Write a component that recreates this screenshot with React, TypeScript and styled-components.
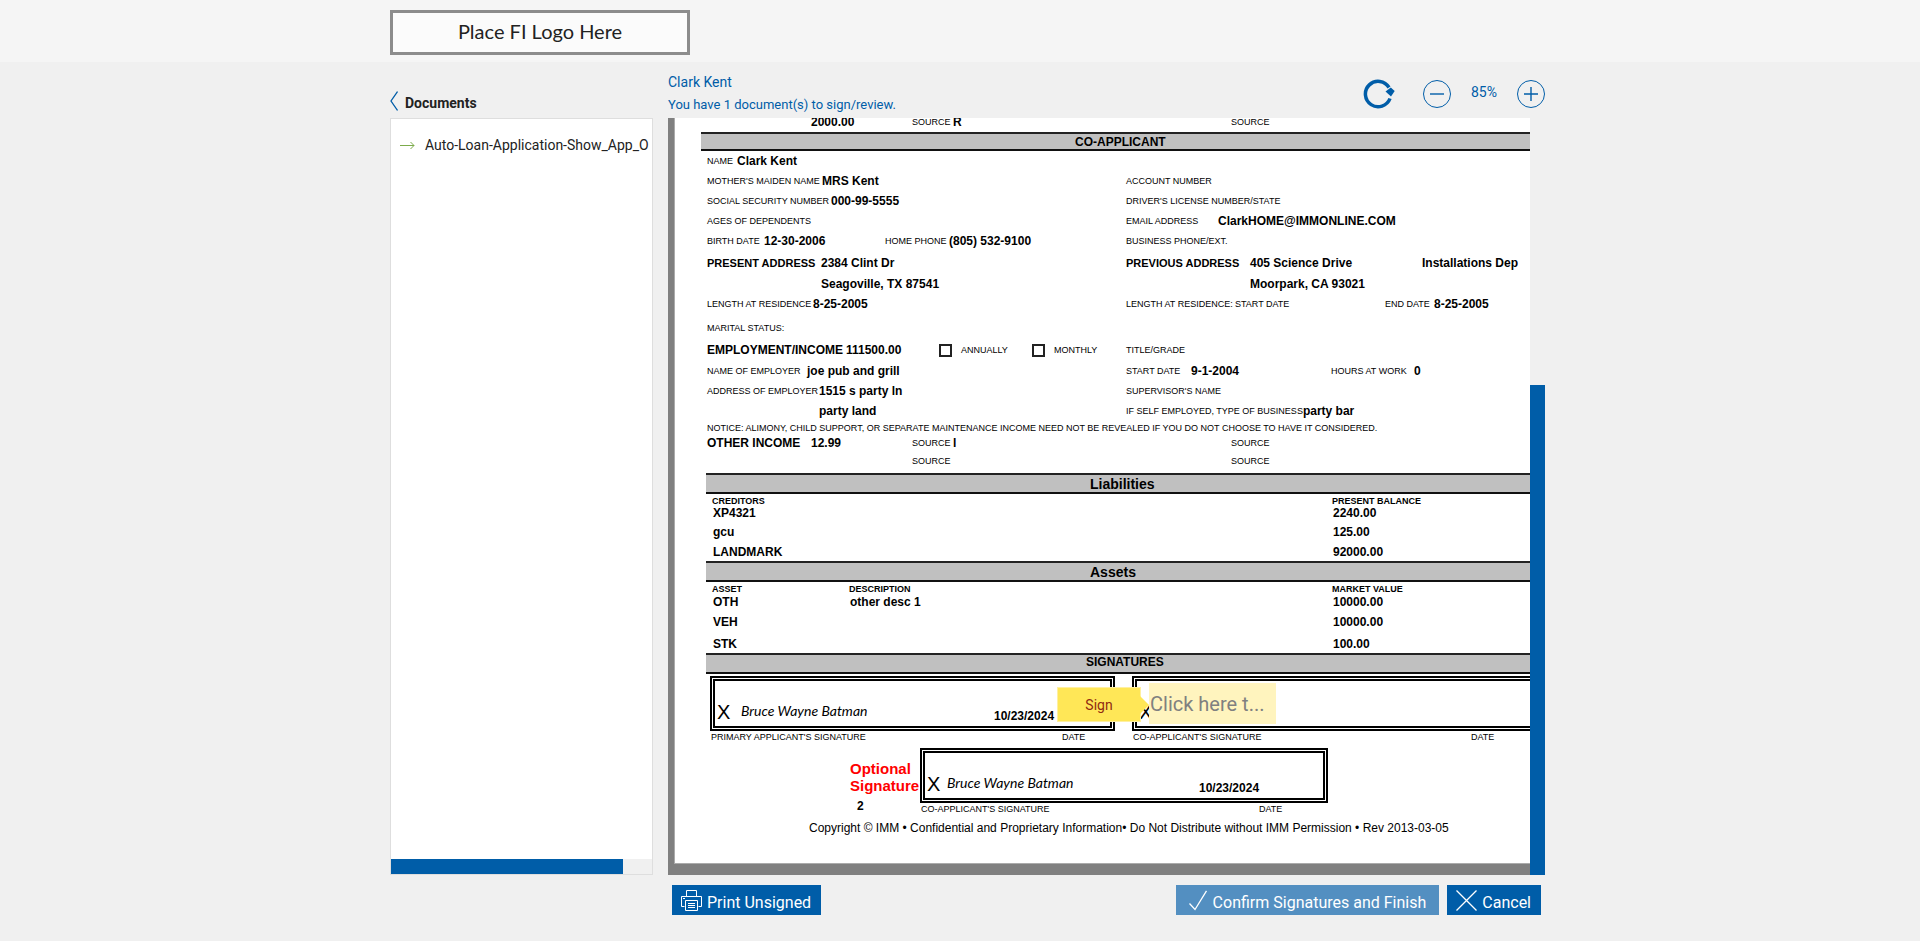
import React from "react";
import styled, { createGlobalStyle } from "styled-components";

const blue = "#005da8";

const GlobalStyle = createGlobalStyle`
  *, *::before, *::after { box-sizing: border-box; }
  body {
    margin: 0;
    background: #f0f0f0;
    color: #222;
    font-family: Roboto, "Liberation Sans", sans-serif;
    font-size: 14px;
  }
`;

const Header = styled.header`
  background: #f5f5f5;
  height: 62px;
  padding-top: 10px;
`;

const Container = styled.div`
  max-width: 1170px;
  margin: 0 auto;
  padding-left: 15px;
`;

const Logo = styled.div`
  width: 300px;
  height: 45px;
  border: 3px solid #8c8c8c;
  background: #fbfbfb;
  display: flex;
  align-items: center;
  justify-content: center;
  padding-bottom: 3px;
  font-family: Lato, sans-serif;
  font-size: 20px;
  line-height: 24px;
  color: #222;
`;

const Main = styled.main`
  display: grid;
  grid-template-columns: 263px minmax(0, 1fr);
  grid-template-rows: 56px auto auto;
  column-gap: 15px;
`;

const BackLink = styled.a`
  display: flex;
  align-items: flex-start;
  gap: 7px;
  padding-top: 29px;
  color: #222;
  font-weight: 700;
  line-height: 24px;
  text-decoration: none;
`;

const TopBar = styled.div`
  display: flex;
  justify-content: space-between;
`;

const Intro = styled.div`
  padding-top: 9px;
  line-height: 22px;
  color: ${blue};
`;

const Person = styled.div``;

const Pending = styled.div`
  padding-top: 1px;
  font-size: 13px;
`;

const Tools = styled.div`
  display: flex;
  align-items: center;
  height: 56px;
  padding-top: 8px;
`;

const IconButton = styled.button`
  display: flex;
  padding: 0;
  border: 0;
  background: none;
  color: ${blue};
`;

const RefreshButton = styled(IconButton)`
  margin-right: 28px;
`;

const ZoomLevel = styled.span`
  width: 66px;
  padding-bottom: 4px;
  text-align: center;
  color: ${blue};
`;

const Sidebar = styled.nav`
  border: 1px solid #dedede;
  background: #fff;
  display: flex;
  flex-direction: column;
  justify-content: space-between;
  overflow: hidden;
`;

const DocLink = styled.a`
  display: flex;
  align-items: center;
  gap: 10px;
  padding: 16px 0 0 9px;
  line-height: 20px;
  white-space: nowrap;
  color: #222;
  text-decoration: none;
`;

const SideTrack = styled.div`
  height: 15px;
  background: #f0f0f0;
`;

const SideThumb = styled.div`
  width: 89%;
  height: 15px;
  background: ${blue};
`;

const Viewer = styled.section`
  display: flex;
  min-width: 0;
`;

const Canvas = styled.div`
  flex: 1;
  min-width: 0;
  background: #808080;
  padding: 0 0 11px 6px;
  overflow: hidden;
`;

const ViewTrack = styled.div`
  width: 15px;
  display: flex;
  flex-direction: column;
  justify-content: flex-end;
`;

const ViewThumb = styled.div`
  height: 490px;
  background: ${blue};
`;

const Page = styled.article`
  background: #fff;
  border-left: 1px solid #ababab;
  border-bottom: 1px solid #ababab;
  padding-bottom: 27px;
  overflow: hidden;
  font-family: "Liberation Sans", Arial, sans-serif;
  color: #000;
  white-space: nowrap;
`;

const Form = styled.div`
  padding: 0 0 1px 32px;
`;

const FirstForm = styled(Form)`
  margin-top: -5px;
  padding-bottom: 1px;
`;

const Line = styled.div<{ $h: number }>`
  display: flex;
  align-items: center;
  height: ${(p) => p.$h}px;
`;

const Half = styled.div`
  flex: 0 0 419px;
  display: flex;
  align-items: center;
`;

const Label = styled.span<{ $w?: number }>`
  flex: 0 0 ${(p) => (p.$w ? `${p.$w}px` : "auto")};
  font-size: 9px;
  line-height: 12px;
`;

const Strong = styled(Label)`
  font-size: 11px;
  font-weight: 700;
`;

const Value = styled(Label)`
  font-size: 12px;
  line-height: 14px;
  font-weight: 700;
`;

const Space = styled.span<{ $w: number }>`
  flex: 0 0 ${(p) => p.$w}px;
`;

const Tick = styled.label<{ $w: number }>`
  flex: 0 0 ${(p) => p.$w}px;
  display: flex;
  align-items: center;
  gap: 9px;
  font-size: 9px;
  line-height: 12px;
`;

const TickBox = styled.input`
  appearance: none;
  width: 13px;
  height: 13px;
  margin: 0;
  border: 2px solid #222;
  background: #fff;
`;

const Band = styled.h2<{ $h: number; $indent: number; $size: number; $left: number }>`
  display: flex;
  align-items: center;
  height: ${(p) => p.$h}px;
  margin: 0 0 0 ${(p) => p.$left}px;
  padding-left: ${(p) => p.$indent}px;
  border-top: 2px solid #222;
  border-bottom: 2px solid #111;
  background: #c0c0c0;
  font-size: ${(p) => p.$size}px;
  line-height: 16px;
`;

const SignBand = styled(Band)`
  padding-bottom: 3px;
`;

const Table = styled.table`
  table-layout: fixed;
  width: 100%;
  border-collapse: collapse;
  text-align: left;
`;

const TableWrap = styled.div`
  padding-left: 37px;
`;

const Row = styled.tr<{ $h: number }>`
  height: ${(p) => p.$h}px;
`;

const Th = styled.th<{ $w?: number }>`
  width: ${(p) => (p.$w ? `${p.$w}px` : "auto")};
  padding: 0;
  font-size: 9px;
  line-height: 12px;
`;

const Td = styled.td`
  padding: 0 0 0 1px;
  font-size: 12px;
  line-height: 13px;
  font-weight: 700;
`;

const Signatures = styled.div`
  display: flex;
  gap: 17px;
  padding: 2px 0 0 35px;
`;

const Signer = styled.div<{ $w: number }>`
  flex: 0 0 ${(p) => p.$w}px;
  position: relative;
`;

const SignBox = styled.div`
  display: flex;
  align-items: flex-end;
  height: 55px;
  padding: 0 0 2px 2px;
  border: 5px double #000;
`;

const Mark = styled.span<{ $w: number }>`
  flex: 0 0 ${(p) => p.$w}px;
  font-size: 20px;
  line-height: 24px;
`;

const Script = styled.span<{ $w: number }>`
  flex: 0 0 ${(p) => p.$w}px;
  font-family: Lato, sans-serif;
  font-size: 14px;
  font-style: italic;
  line-height: 26px;
`;

const SignDate = styled(Value)`
  padding-bottom: 1px;
`;

const Caption = styled.div`
  display: flex;
  padding-left: 1px;
  height: 17px;
  align-items: flex-start;
`;

const SignTag = styled.button`
  position: absolute;
  left: -75px;
  top: 11px;
  width: 84px;
  height: 35px;
  padding: 0;
  border: 1px solid #fff0a0;
  background: #ffe757;
  color: #8f2a12;
  font: 14px Roboto, sans-serif;

  &::after {
    content: "";
    position: absolute;
    left: 82px;
    top: 8px;
    border-left: 9px solid #ffe757;
    border-top: 9px solid transparent;
    border-bottom: 9px solid transparent;
  }
`;

const SignField = styled.button`
  position: absolute;
  left: 17px;
  top: 7px;
  width: 127px;
  height: 41px;
  padding: 0 0 0 1px;
  border: 0;
  background: #fff4be;
  color: #808080;
  font: 20px Roboto, sans-serif;
  text-align: left;
`;

const Optional = styled.div`
  display: flex;
  padding-left: 175px;
`;

const OptionalNote = styled.div`
  width: 70px;
  padding-top: 12px;
  font-size: 15px;
  line-height: 17px;
  font-weight: 700;
  color: #f00;
  white-space: normal;
`;

const OptionalCount = styled.div`
  padding: 4px 0 0 7px;
  font-size: 12px;
  color: #000;
`;

const Copyright = styled.p`
  margin: 0;
  padding-left: 134px;
  font-size: 12px;
  line-height: 16px;
`;

const Actions = styled.footer`
  grid-column: 2;
  display: flex;
  gap: 8px;
  padding: 10px 4px 0;
`;

const ActionButton = styled.button<{ $push?: boolean }>`
  display: flex;
  align-items: center;
  gap: 5px;
  height: 30px;
  margin-left: ${(p) => (p.$push ? "auto" : "0")};
  padding: 0 10px 0 9px;
  border: 0;
  background: ${blue};
  color: #fff;
  font: 16px Roboto, sans-serif;
  white-space: nowrap;

  &:disabled {
    background: #538fc1;
    padding: 0 13px 0 12px;
  }
`;

const ActionText = styled.span`
  padding-top: 4px;
`;

function SignatureLine({ mark, gap }: { mark: number; gap: number }) {
  return (
    <SignBox>
      <Mark $w={mark}>X</Mark>
      <Script $w={gap}>Bruce Wayne Batman</Script>
      <SignDate>10/23/2024</SignDate>
    </SignBox>
  );
}

type DataRow = { h: number; cells: string[] };

function DataTable({ head, widths, rows }: { head: string[]; widths: (number | undefined)[]; rows: DataRow[] }) {
  return (
    <TableWrap>
      <Table>
        <thead>
          <Row $h={13}>
            {head.map((h, i) => (
              <Th key={h} $w={widths[i]} scope="col">{h}</Th>
            ))}
          </Row>
        </thead>
        <tbody>
          {rows.map((r) => (
            <Row key={r.cells[0]} $h={r.h}>
              {r.cells.map((c, i) => (
                <Td key={i}>{c}</Td>
              ))}
            </Row>
          ))}
        </tbody>
      </Table>
    </TableWrap>
  );
}

export default function App() {
  return (
    <>
      <GlobalStyle />
      <Header>
        <Container>
          <Logo>Place FI Logo Here</Logo>
        </Container>
      </Header>
      <Container>
        <Main>
          <BackLink href="#">
            <svg width="8" height="20" viewBox="0 0 8 20" fill="none" stroke={blue} strokeWidth="1.3">
              <path d="M7.5 .5 1 10l6.500 9.500" />
            </svg>
            Documents
          </BackLink>
          <TopBar>
            <Intro>
              <Person>Clark Kent</Person>
              <Pending>You have 1 document(s) to sign/review.</Pending>
            </Intro>
            <Tools>
              <RefreshButton aria-label="Refresh">
                <svg width="32" height="30" viewBox="0 0 32 30" fill="none">
                  <path d="M27 19.500A12.700 12.700 0 1 1 26 8.500" stroke={blue} strokeWidth="3.500" />
                  <path d="M22.500 12.500 27.800 8.500 31.700 12 28 17.500Z" fill={blue} />
                </svg>
              </RefreshButton>
              <IconButton aria-label="Zoom out">
                <svg width="28" height="28" viewBox="0 0 28 28" fill="none" stroke={blue}>
                  <circle cx="14" cy="14" r="13.500" />
                  <path d="M7 14h14" strokeWidth="1.400" />
                </svg>
              </IconButton>
              <ZoomLevel>85%</ZoomLevel>
              <IconButton aria-label="Zoom in">
                <svg width="28" height="28" viewBox="0 0 28 28" fill="none" stroke={blue}>
                  <circle cx="14" cy="14" r="13.500" />
                  <path d="M7 14h14M14 7v14" strokeWidth="1.400" />
                </svg>
              </IconButton>
            </Tools>
          </TopBar>

          <Sidebar aria-label="Documents">
            <DocLink href="#">
              <svg width="15" height="9" viewBox="0 0 15 9" fill="none" stroke="#7cab4b">
                <path d="M0 4.500h14M10.500 1l3.500 3.500-3.500 3.500" />
              </svg>
              Auto-Loan-Application-Show_App_O
            </DocLink>
            <SideTrack><SideThumb /></SideTrack>
          </Sidebar>

          <Viewer>
            <Canvas>
              <Page>
                <FirstForm>
                  <Line $h={18}>
                    <Space $w={104} />
                    <Value $w={101}>2000.00</Value>
                    <Label $w={41}>SOURCE</Label>
                    <Value $w={278}>R</Value>
                    <Label>SOURCE</Label>
                  </Line>
                </FirstForm>
                <Band $h={19} $indent={374} $size={12} $left={26}>CO-APPLICANT</Band>
                <Form>
                  <Line $h={20}><Label $w={30}>NAME</Label><Value>Clark Kent</Value></Line>
                  <Line $h={20}>
                    <Half><Label $w={115}>MOTHER'S MAIDEN NAME</Label><Value>MRS Kent</Value></Half>
                    <Label>ACCOUNT NUMBER</Label>
                  </Line>
                  <Line $h={20}>
                    <Half><Label $w={124}>SOCIAL SECURITY NUMBER</Label><Value>000-99-5555</Value></Half>
                    <Label>DRIVER'S LICENSE NUMBER/STATE</Label>
                  </Line>
                  <Line $h={20}>
                    <Half><Label>AGES OF DEPENDENTS</Label></Half>
                    <Label $w={92}>EMAIL ADDRESS</Label><Value>ClarkHOME@IMMONLINE.COM</Value>
                  </Line>
                  <Line $h={20}>
                    <Half>
                      <Label $w={57}>BIRTH DATE</Label><Value $w={121}>12-30-2006</Value>
                      <Label $w={64}>HOME PHONE</Label><Value>(805) 532-9100</Value>
                    </Half>
                    <Label>BUSINESS PHONE/EXT.</Label>
                  </Line>
                  <Line $h={24}>
                    <Half><Strong $w={114}>PRESENT ADDRESS</Strong><Value>2384 Clint Dr</Value></Half>
                    <Strong $w={124}>PREVIOUS ADDRESS</Strong><Value $w={172}>405 Science Drive</Value>
                    <Value>Installations Dep</Value>
                  </Line>
                  <Line $h={17}>
                    <Half><Space $w={114} /><Value>Seagoville, TX 87541</Value></Half>
                    <Space $w={124} /><Value>Moorpark, CA 93021</Value>
                  </Line>
                  <Line $h={24}>
                    <Half><Label $w={106}>LENGTH AT RESIDENCE</Label><Value>8-25-2005</Value></Half>
                    <Label $w={109}>LENGTH AT RESIDENCE:</Label><Label $w={150}>START DATE</Label>
                    <Label $w={49}>END DATE</Label><Value>8-25-2005</Value>
                  </Line>
                  <Line $h={24}><Label>MARITAL STATUS:</Label></Line>
                  <Line $h={20}>
                    <Half>
                      <Value $w={139}>EMPLOYMENT/INCOME</Value><Value $w={93}>111500.00</Value>
                      <Tick $w={93}><TickBox type="checkbox" />ANNUALLY</Tick>
                      <Tick $w={94}><TickBox type="checkbox" />MONTHLY</Tick>
                    </Half>
                    <Label>TITLE/GRADE</Label>
                  </Line>
                  <Line $h={21}>
                    <Half><Label $w={100}>NAME OF EMPLOYER</Label><Value>joe pub and grill</Value></Half>
                    <Label $w={65}>START DATE</Label><Value $w={140}>9-1-2004</Value>
                    <Label $w={83}>HOURS AT WORK</Label><Value>0</Value>
                  </Line>
                  <Line $h={20}>
                    <Half><Label $w={112}>ADDRESS OF EMPLOYER</Label><Value>1515 s party ln</Value></Half>
                    <Label>SUPERVISOR'S NAME</Label>
                  </Line>
                  <Line $h={19}>
                    <Half><Space $w={112} /><Value>party land</Value></Half>
                    <Label $w={169}>IF SELF EMPLOYED, TYPE OF BUSINESS</Label><Value>party bar</Value>
                  </Line>
                  <Line $h={15}>
                    <Label>
                      NOTICE: ALIMONY, CHILD SUPPORT, OR SEPARATE MAINTENANCE INCOME NEED NOT BE REVEALED IF YOU DO NOT CHOOSE TO HAVE IT CONSIDERED.
                    </Label>
                  </Line>
                  <Line $h={15}>
                    <Value $w={104}>OTHER INCOME</Value><Value $w={101}>12.99</Value>
                    <Label $w={41}>SOURCE</Label><Value $w={278}>l</Value><Label>SOURCE</Label>
                  </Line>
                  <Line $h={22}>
                    <Space $w={205} /><Label $w={319}>SOURCE</Label><Label>SOURCE</Label>
                  </Line>
                </Form>

                <Band $h={21} $indent={384} $size={14} $left={31}>Liabilities</Band>
                <DataTable
                  head={["CREDITORS", "PRESENT BALANCE"]}
                  widths={[620, undefined]}
                  rows={[
                    { h: 13, cells: ["XP4321", "2240.00"] },
                    { h: 24, cells: ["gcu", "125.00"] },
                    { h: 17, cells: ["LANDMARK", "92000.00"] },
                  ]}
                />
                <Band $h={21} $indent={384} $size={14} $left={31}>Assets</Band>
                <DataTable
                  head={["ASSET", "DESCRIPTION", "MARKET VALUE"]}
                  widths={[137, 483, undefined]}
                  rows={[
                    { h: 14, cells: ["OTH", "other desc 1", "10000.00"] },
                    { h: 26, cells: ["VEH", "", "10000.00"] },
                    { h: 18, cells: ["STK", "", "100.00"] },
                  ]}
                />
                <SignBand $h={21} $indent={380} $size={12} $left={31}>SIGNATURES</SignBand>

                <Signatures>
                  <Signer $w={405}>
                    <SignatureLine mark={24} gap={253} />
                    <Caption><Label $w={351}>PRIMARY APPLICANT'S SIGNATURE</Label><Label>DATE</Label></Caption>
                  </Signer>
                  <Signer $w={405}>
                    <SignBox><Mark $w={24}>X</Mark></SignBox>
                    <Caption><Label $w={338}>CO-APPLICANT'S SIGNATURE</Label><Label>DATE</Label></Caption>
                    <SignField>Click here t...</SignField>
                    <SignTag>Sign</SignTag>
                  </Signer>
                </Signatures>
                <Optional>
                  <OptionalNote>
                    Optional Signature
                    <OptionalCount>2</OptionalCount>
                  </OptionalNote>
                  <Signer $w={408}>
                    <SignatureLine mark={20} gap={252} />
                    <Caption><Label $w={338}>CO-APPLICANT'S SIGNATURE</Label><Label>DATE</Label></Caption>
                  </Signer>
                </Optional>
                <Copyright>
                  Copyright © IMM • Confidential and Proprietary Information• Do Not Distribute without IMM Permission • Rev 2013-03-05
                </Copyright>
              </Page>
            </Canvas>
            <ViewTrack><ViewThumb /></ViewTrack>
          </Viewer>

          <Actions>
            <ActionButton>
              <svg width="21" height="21" viewBox="0 0 21 21" fill="none" stroke="#fff" strokeWidth="1">
                <path d="M5.500 6V.5h10V6M3.500 16.500h-3v-10h20v10h-3M4.500 10.500h12v10h-12zM7 13.500h7M7 15.500h7M7 17.500h7M2 8.500h2" />
              </svg>
              <ActionText>Print Unsigned</ActionText>
            </ActionButton>
            <ActionButton $push disabled>
              <svg width="20" height="21" viewBox="0 0 20 21" fill="none" stroke="#fff" strokeWidth="1.300">
                <path d="M1.500 13.500 7 19.500 18.500 .8" />
              </svg>
              <ActionText>Confirm Signatures and Finish</ActionText>
            </ActionButton>
            <ActionButton>
              <svg width="21" height="21" viewBox="0 0 21 21" fill="none" stroke="#fff" strokeWidth="1.300">
                <path d="M.5 .5l20 20M20.500 .5l-20 20" />
              </svg>
              <ActionText>Cancel</ActionText>
            </ActionButton>
          </Actions>
        </Main>
      </Container>
    </>
  );
}
